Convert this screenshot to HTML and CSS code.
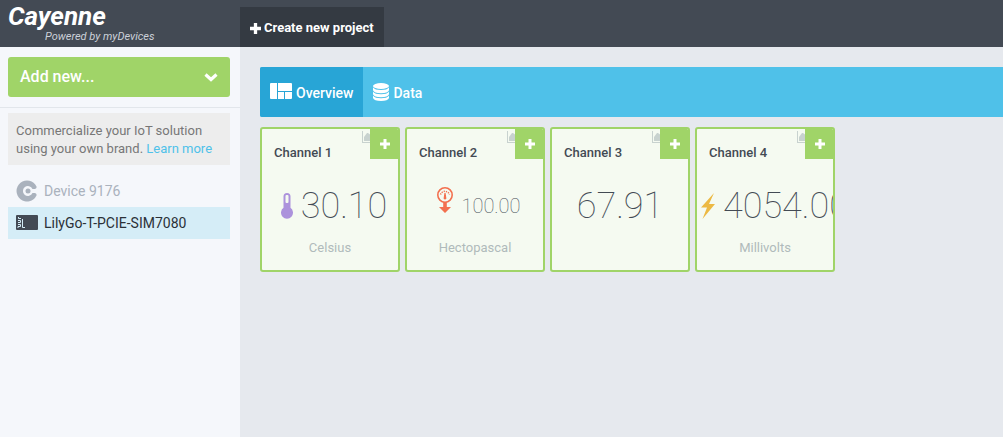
FILE: index.html
```html
<!DOCTYPE html>
<html lang="en">
<head>
<meta charset="utf-8">
<meta name="viewport" content="width=device-width, initial-scale=1">
<title>Cayenne</title>
<link rel="stylesheet" href="styles.css">
</head>
<body>
<svg class="defs" aria-hidden="true">
  <symbol id="chart" viewBox="0 0 15 12"><path d="M0 0h1v11h14v1H0z"/><path d="M2 10V6l3-4h1l4 3 3 1v4z"/></symbol>
  <symbol id="plus" viewBox="0 0 10 10"><path d="M3.500 0h3v3.500H10v3H6.500V10h-3V6.500H0v-3h3.500z"/></symbol>
</svg>
<header class="topbar">
  <a class="brand" href="#"><span class="brand-name">Cayenne</span><span class="brand-sub">Powered by myDevices</span></a>
  <button class="create" type="button"><svg class="create-icon" aria-hidden="true"><use href="#plus"/></svg>Create new project</button>
</header>
<div class="layout">
  <aside class="sidebar">
    <div class="add-wrap">
      <button class="add-new" type="button">Add new...<svg class="chevron" viewBox="0 0 14 9" aria-hidden="true"><path d="M1.500 1.500l5.500 5 5.500-5" fill="none" stroke="currentColor" stroke-width="3.200"/></svg></button>
    </div>
    <p class="notice">Commercialize your IoT solution using your own brand. <a href="#">Learn more</a></p>
    <nav class="devices">
      <a class="device" href="#"><svg class="device-icon" viewBox="0 0 22 22" aria-hidden="true"><path d="M20.500 15.500A10.500 10.500 0 1 1 20.500 6.500Q21 8.500 19 9H16.500A5 5 0 1 0 16.500 13H19Q21 13.500 20.500 15.500z" fill="#aab2bd"/><circle cx="12" cy="11" r="2.500" fill="#aab2bd"/></svg>Device 9176</a>
      <a class="device device-active" href="#"><svg class="device-icon" viewBox="0 0 22 22" aria-hidden="true"><rect y="3" width="22" height="15" rx="1" fill="#434a54"/><path d="M2.500 5v1.500H5M2 8.500h2.500v2H2M2 12.500h2.500v2H2V16M6.500 7v8.500H9" fill="none" stroke="#d5edf7"/></svg>LilyGo-T-PCIE-SIM7080</a>
    </nav>
  </aside>
  <main class="content">
    <nav class="tabs">
      <a class="tab tab-active" href="#"><svg class="tab-overview" viewBox="0 0 22 16" aria-hidden="true"><path d="M0 1q0-1 1-1h6v16H1q-1 0-1-1zM8 0h13q1 0 1 1v7H8zM8 9h6v7H8zM15 9h7v6q0 1-1 1h-6z"/></svg>Overview</a>
      <a class="tab" href="#"><svg class="tab-data" viewBox="0 0 16 18" aria-hidden="true"><ellipse cx="8" cy="3" rx="8" ry="3"/><path d="M0 4.500q2 2.500 8 2.500t8-2.500v2.700q-1 3-8 3t-8-3zM0 8.700q2 2.500 8 2.500t8-2.500v2.500q-1 3-8 3t-8-3zM0 12.700q2 2.500 8 2.500t8-2.500v2.300q-1 3-8 3t-8-3z"/></svg>Data</a>
    </nav>
    <section class="cards">
      <article class="card">
        <svg class="card-chart" aria-hidden="true"><use href="#chart"/></svg>
        <button class="card-add" type="button" aria-label="Add to Channel 1"><svg class="plus" aria-hidden="true"><use href="#plus"/></svg></button>
        <h2 class="card-title">Channel 1</h2>
        <div class="reading"><svg class="icon-temp" viewBox="0 0 12 26" aria-hidden="true"><path d="M6 0Q9.500 0 9.500 3.500v11.300a6 6 0 1 1-7 0V3.500Q2.500 0 6 0z" fill="#ac92dc"/><rect x="4.500" y="2" width="3" height="8" rx="1" fill="#f5faf1"/></svg><span class="value">30.10</span></div>
        <p class="unit">Celsius</p>
      </article>
      <article class="card">
        <svg class="card-chart" aria-hidden="true"><use href="#chart"/></svg>
        <button class="card-add" type="button" aria-label="Add to Channel 2"><svg class="plus" aria-hidden="true"><use href="#plus"/></svg></button>
        <h2 class="card-title">Channel 2</h2>
        <div class="reading reading-small"><svg class="icon-pressure" viewBox="0 0 16 26" aria-hidden="true"><circle cx="8" cy="8" r="7.200" fill="none" stroke="#f3704f" stroke-width="1.600"/><path d="M3.500 7.500a4.800 4.800 0 0 1 9 0" fill="none" stroke="#f3704f" stroke-width="1.500" stroke-dasharray="1.200 1"/><path d="M7.400 6h1.200l.8 5.500a1.500 1.500 0 0 1-2.800 0zM6.200 15h3.600v5H14l-6 6-6-6h4.200z" fill="#f3704f"/></svg><span class="value">100.00</span></div>
        <p class="unit">Hectopascal</p>
      </article>
      <article class="card">
        <svg class="card-chart" aria-hidden="true"><use href="#chart"/></svg>
        <button class="card-add" type="button" aria-label="Add to Channel 3"><svg class="plus" aria-hidden="true"><use href="#plus"/></svg></button>
        <h2 class="card-title">Channel 3</h2>
        <div class="reading reading-plain"><span class="value">67.91</span></div>
      </article>
      <article class="card">
        <svg class="card-chart" aria-hidden="true"><use href="#chart"/></svg>
        <button class="card-add" type="button" aria-label="Add to Channel 4"><svg class="plus" aria-hidden="true"><use href="#plus"/></svg></button>
        <h2 class="card-title">Channel 4</h2>
        <div class="reading reading-wide"><svg class="icon-volt" viewBox="0 0 14 26" aria-hidden="true"><path d="M13 0L0 14.500h6L1.500 26 14 11H8z" fill="#ecb944"/></svg><span class="value">4054.00</span></div>
        <p class="unit">Millivolts</p>
      </article>
    </section>
  </main>
</div>
</body>
</html>
```
FILE: styles.css
```css
* { box-sizing: border-box; }
body {
  margin: 0;
  min-height: 100vh;
  display: flex;
  flex-direction: column;
  background: #e6e9ee;
  color: #434a54;
  font: 14px/18px Roboto, "Open Sans", sans-serif;
}
a { color: inherit; text-decoration: none; }
button { border: 0; padding: 0; font: inherit; color: #fff; cursor: pointer; }
svg { flex: none; fill: currentColor; }
.defs { position: absolute; width: 0; height: 0; }

.topbar { display: flex; align-items: flex-end; height: 47px; background: #434a54; color: #fff; }
.brand { display: flex; flex-direction: column; width: 240px; padding: 0 0 4px 8px; font-style: italic; }
.brand-name { font-size: 26px; font-weight: 700; line-height: 28px; }
.brand-sub { padding-left: 37px; font-size: 11px; line-height: 13px; color: #ccd1d9; }
.create { display: flex; align-items: center; gap: 3px; height: 40px; padding: 2px 10px 0; background: #343a42; font-size: 13px; font-weight: 700; }
.create-icon { width: 11px; height: 11px; }

.layout { flex: 1; display: flex; }
.sidebar { width: 240px; flex: none; background: #f5f7fb; }
.add-wrap { padding: 10px 10px 10px 8px; border-bottom: 1px solid #e2e6eb; }
.add-new {
  display: flex; align-items: center; justify-content: space-between;
  width: 100%; height: 40px; padding: 0 12px; border-radius: 3px;
  background: #a0d468; font-size: 16px; font-weight: 500;
}
.chevron { width: 14px; height: 9px; }
.notice { margin: 5px 10px 10px 8px; padding: 9px 8px 7px; background: #ededed; color: #777; font-size: 13px; }
.notice a { color: #4fc1e9; }
.devices { margin: 0 10px 0 8px; }
.device { display: flex; align-items: center; gap: 6px; height: 32px; padding: 0 8px; color: #aab2bd; }
.device-active { background: #d5edf7; color: #2b3138; }
.device-icon { width: 22px; height: 22px; }

.content { flex: 1; min-width: 0; padding: 20px 0 0 20px; }
.tabs { display: flex; height: 50px; background: #4fc1e9; border-radius: 2px 0 0 2px; color: #fff; font-weight: 500; }
.tab { display: flex; align-items: center; gap: 4px; padding: 2px 10px 0; }
.tab-active { background: #28a5d6; border-radius: 2px 0 0 2px; }
.tab-overview { width: 22px; height: 16px; margin-bottom: 4px; }
.tab-data { width: 16px; height: 18px; margin-bottom: 2px; }

.cards { display: flex; flex-wrap: wrap; gap: 5px; padding-top: 10px; }
.card {
  position: relative; width: 140px; height: 145px; overflow: hidden;
  border: 2px solid #a0d468; border-radius: 3px; background: #f5faf1;
}
.card-chart { position: absolute; top: 2px; right: 21px; width: 15px; height: 12px; color: #c8d2cf; }
.card-add { position: absolute; top: 0; right: 0; display: grid; place-items: center; width: 28px; height: 30px; padding-left: 2px; background: #a0d468; }
.plus { width: 10px; height: 10px; }
.card-title { margin: 15px 12px 0; font-size: 13px; line-height: 18px; font-weight: 500; }
.reading { display: flex; align-items: center; justify-content: center; gap: 8px; height: 56px; margin-top: 16px; padding-left: 8px; white-space: nowrap; }
.reading-plain { padding-left: 0; }
.reading-wide { justify-content: flex-start; padding-left: 4px; }
.value { font-size: 36px; line-height: 40px; font-weight: 100; color: #434a54; }
.reading-small .value { font-size: 20px; line-height: 24px; font-weight: 100; }
.icon-temp { width: 12px; height: 26px; }
.icon-pressure { width: 16px; height: 26px; margin-bottom: 12px; }
.icon-volt { width: 14px; height: 26px; }
.unit { margin: 5px 0 0; text-align: center; font-size: 13px; color: #b0babb; }
```
